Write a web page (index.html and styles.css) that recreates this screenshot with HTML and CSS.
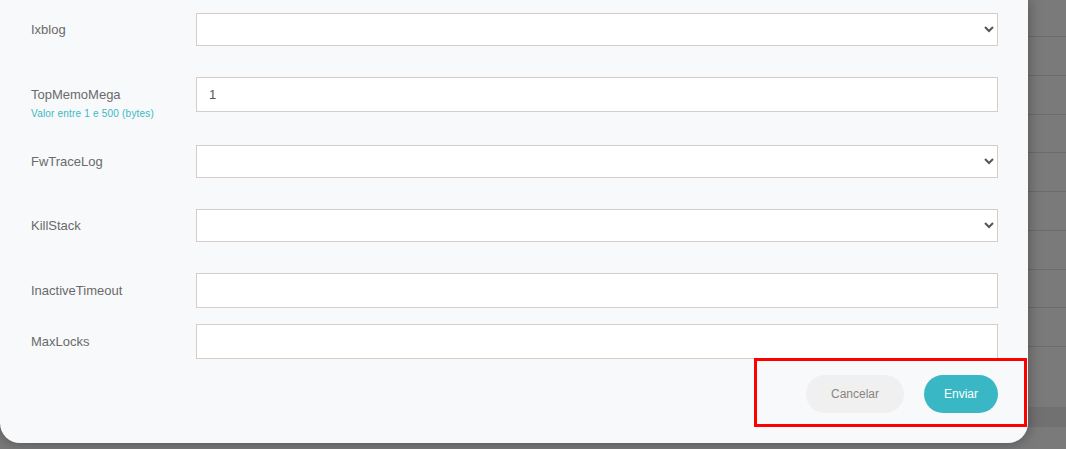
FILE: index.html
```html
<!DOCTYPE html>
<html lang="pt">
<head>
<meta charset="utf-8">
<title>Configuração</title>
<link rel="stylesheet" href="styles.css">
</head>
<body>
<div class="page">
  <div class="bg-row"></div>
  <div class="bg-row"></div>
  <div class="bg-row"></div>
  <div class="bg-row"></div>
  <div class="bg-row"></div>
  <div class="bg-row"></div>
  <div class="bg-row"></div>
  <div class="bg-row"></div>
  <div class="bg-row"></div>
  <div class="bg-row bg-tall"></div>
  <div class="bg-band"></div>
</div>

<div class="modal">
  <form class="form">
    <div class="row">
      <div class="label-col"><label class="lbl lbl-select">Ixblog</label></div>
      <select class="field field-select"><option></option></select>
    </div>
    <div class="row row-hint">
      <div class="label-col">
        <label class="lbl lbl-input">TopMemoMega</label>
        <span class="hint">Valor entre 1 e 500 (bytes)</span>
      </div>
      <input class="field field-input" type="text" value="1">
    </div>
    <div class="row">
      <div class="label-col"><label class="lbl lbl-select">FwTraceLog</label></div>
      <select class="field field-select"><option></option></select>
    </div>
    <div class="row">
      <div class="label-col"><label class="lbl lbl-select">KillStack</label></div>
      <select class="field field-select"><option></option></select>
    </div>
    <div class="row row-tight">
      <div class="label-col"><label class="lbl lbl-input">InactiveTimeout</label></div>
      <input class="field field-input" type="text" value="">
    </div>
    <div class="row row-tight">
      <div class="label-col"><label class="lbl lbl-input">MaxLocks</label></div>
      <input class="field field-input" type="text" value="">
    </div>
    <div class="footer">
      <button type="button" class="btn btn-cancel">Cancelar</button>
      <button type="button" class="btn btn-send">Enviar</button>
    </div>
  </form>
</div>

<div class="annotation"></div>
</body>
</html>
```

FILE: styles.css
```css
html, body {
  margin: 0;
  padding: 0;
}
body {
  width: 1066px;
  height: 449px;
  overflow: hidden;
  position: relative;
  background: #7a7a7a;
  font-family: "Liberation Sans", Arial, sans-serif;
}

.page {
  display: flex;
  flex-direction: column;
}
.bg-row {
  height: 38.75px;
  box-sizing: border-box;
  border-bottom: 1px solid #6b6b6b;
}
.bg-row:first-child {
  height: 37px;
}
.bg-tall {
  height: 60px;
  border-bottom: none;
}
.bg-band {
  height: 20px;
  background: #717171;
}

.modal {
  position: absolute;
  left: 0;
  top: 0;
  width: 1028px;
  height: 443px;
  box-sizing: border-box;
  background: #f8f9fb;
  border-radius: 0 0 20px 20px;
  box-shadow: 0 0 14px rgba(0, 0, 0, 0.35);
  padding: 13px 30px 0 31px;
}

.form {
  display: flex;
  flex-direction: column;
}

.row {
  display: grid;
  grid-template-columns: 165px 1fr;
  align-items: start;
  height: 64px;
}
.row-hint {
  height: 68px;
}
.row-tight {
  height: 51px;
}

.label-col {
  display: flex;
  flex-direction: column;
}
.lbl {
  display: flex;
  align-items: center;
  font-size: 13px;
  color: #6a6a6a;
}
.lbl-select {
  height: 33px;
}
.lbl-input {
  height: 35px;
}
.hint {
  font-size: 10px;
  line-height: 12px;
  margin-top: -4px;
  letter-spacing: 0.2px;
  color: #3ab8c4;
}

.field {
  box-sizing: border-box;
  width: 100%;
  margin: 0;
  border: 1px solid #d6cdc6;
  border-radius: 0;
  background-color: #ffffff;
  font-family: "Liberation Sans", Arial, sans-serif;
  font-size: 13px;
  color: #555555;
  outline: none;
}
.field-select {
  height: 33px;
  padding: 0 4px 0 12px;
}
.field-input {
  height: 35px;
  padding: 0 12px;
}

.footer {
  display: flex;
  justify-content: flex-end;
  gap: 20px;
}
.btn {
  height: 38px;
  border: none;
  border-radius: 19px;
  font-family: "Liberation Sans", Arial, sans-serif;
  font-size: 12px;
  padding: 0;
  cursor: pointer;
}
.btn-cancel {
  width: 98px;
  background: #f0f0f0;
  color: #8a8480;
}
.btn-send {
  width: 74px;
  background: #39b7c4;
  color: #ffffff;
}

.annotation {
  position: absolute;
  left: 754px;
  top: 358px;
  width: 273px;
  height: 69px;
  box-sizing: border-box;
  border: 3px solid #ff0000;
}
```
